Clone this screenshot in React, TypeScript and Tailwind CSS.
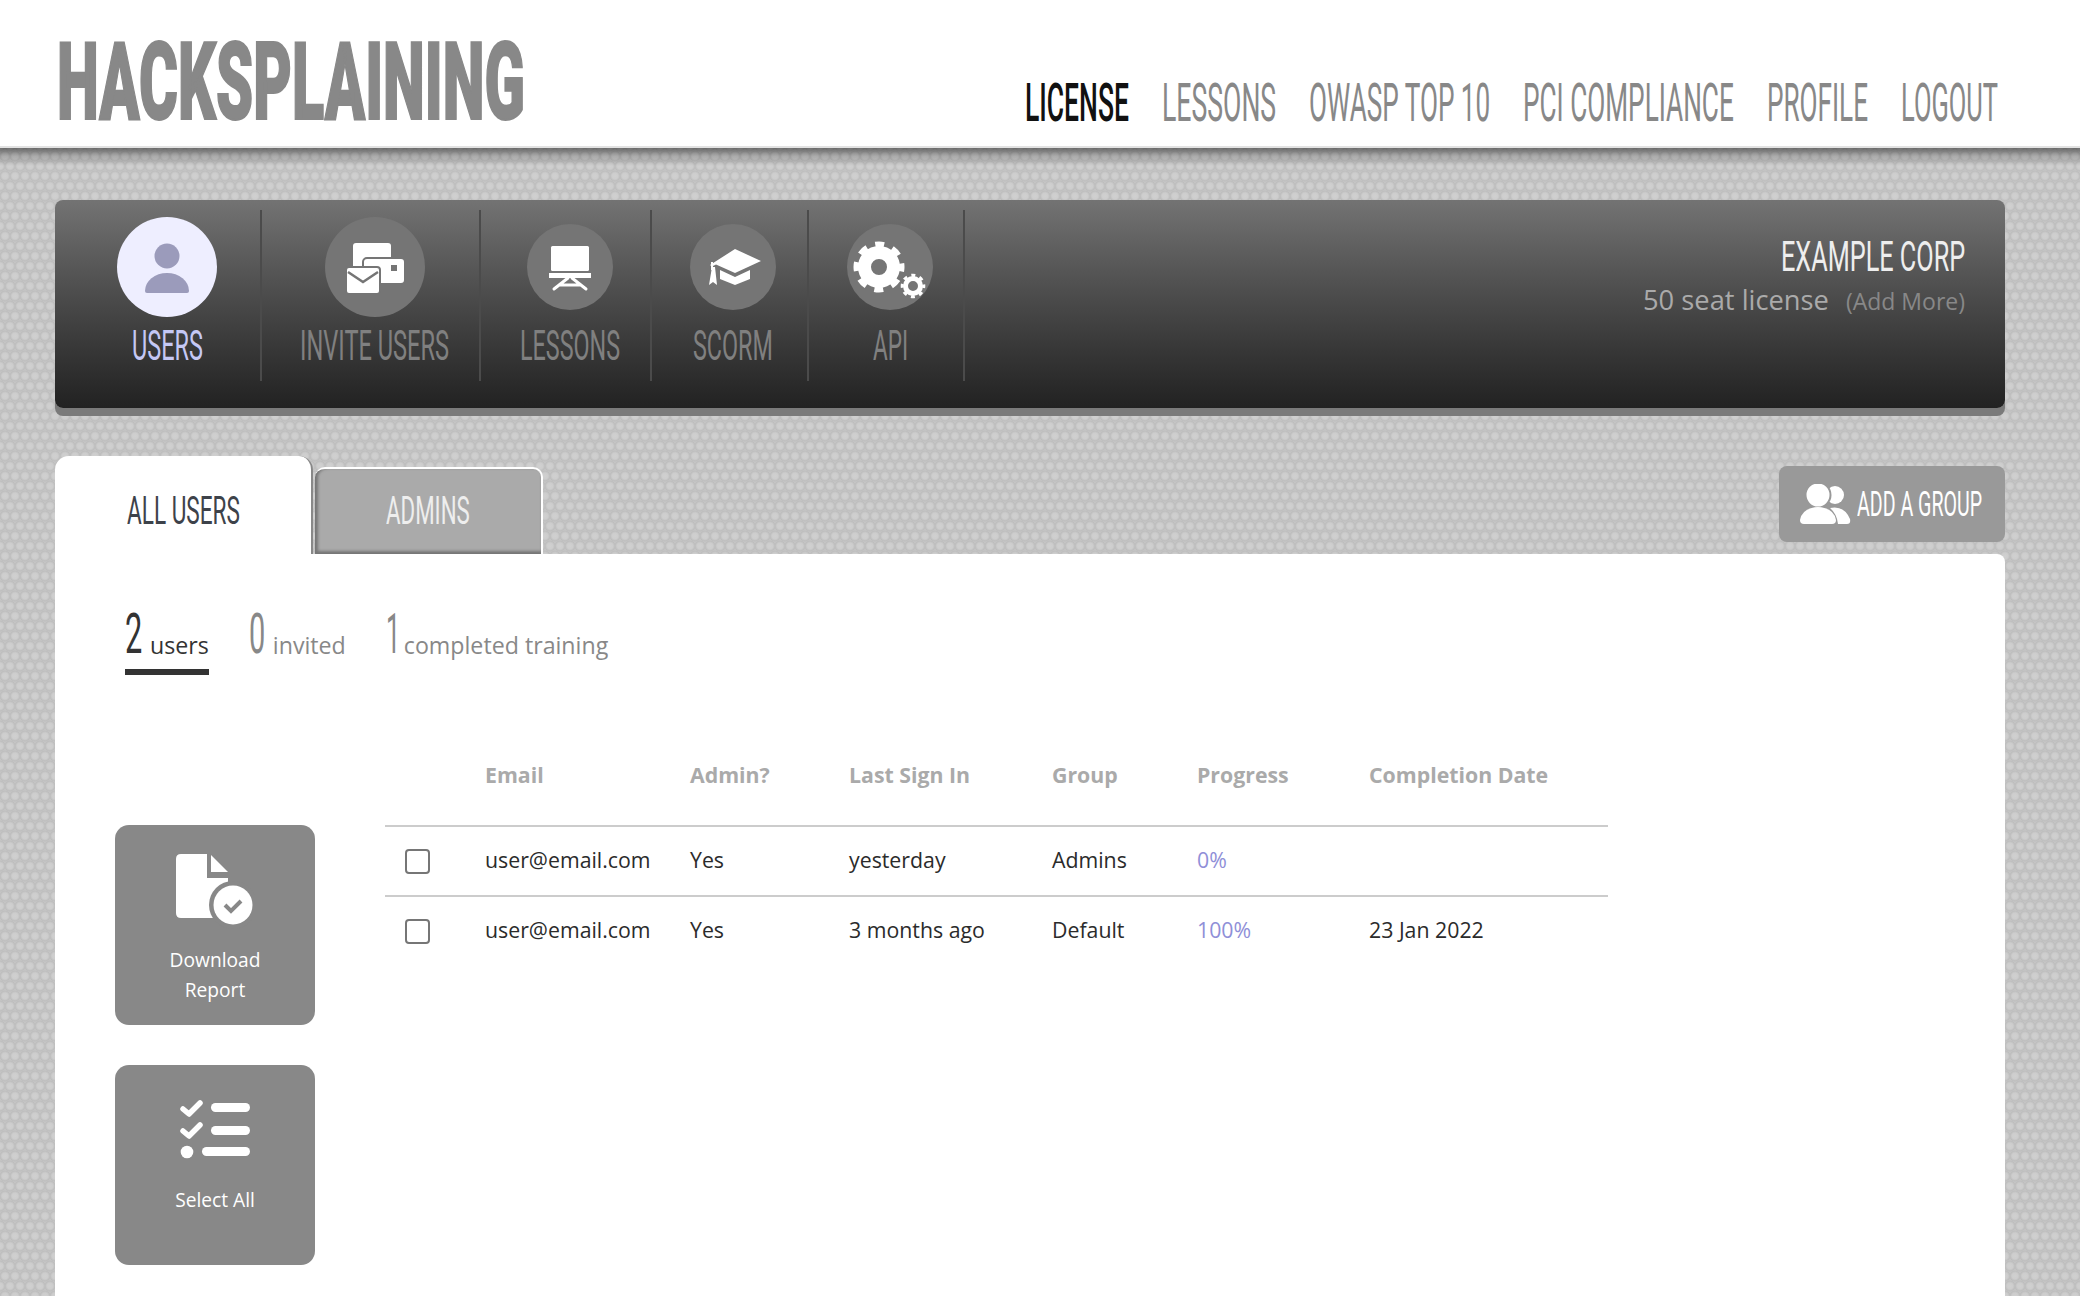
import { useLayoutEffect, useRef, useState } from "react";

// squeezes a line of Roboto to the width of the condensed face in the design
function Fit({ w, className, children }: { w: number; className: string; children: string }) {
  const ref = useRef<HTMLSpanElement>(null);
  const [scale, setScale] = useState(0.5);

  useLayoutEffect(() => {
    if (ref.current) setScale(w / ref.current.offsetWidth);
  }, [w]);

  return (
    <span className={`block shrink-0 font-['Roboto',sans-serif] leading-none ${className}`} style={{ width: w }}>
      <span ref={ref} className="inline-block origin-left whitespace-nowrap" style={{ transform: `scaleX(${scale})` }}>
        {children}
      </span>
    </span>
  );
}

const navLinks = [
  { label: "LICENSE", w: 104, cls: "text-[#111] font-medium" },
  { label: "LESSONS", w: 114, cls: "text-[#888]" },
  { label: "OWASP TOP 10", w: 181, cls: "text-[#888]" },
  { label: "PCI COMPLIANCE", w: 211, cls: "text-[#888]" },
  { label: "PROFILE", w: 101, cls: "text-[#888]" },
  { label: "LOGOUT", w: 97, cls: "text-[#888]" },
];

function UserIcon() {
  return (
    <svg width="100" height="100" viewBox="0 0 100 100">
      <circle cx="50" cy="39" r="12.5" fill="#9b9bbb" />
      <path d="M28 74a22 18 0 0 1 44 0q0 2-2 2H30q-2 0-2-2z" fill="#9b9bbb" />
    </svg>
  );
}

function InviteIcon() {
  return (
    <svg width="100" height="100" viewBox="0 0 100 100">
      <rect x="28" y="26" width="38" height="30" rx="3" fill="#fff" />
      <rect x="38" y="41" width="42" height="26" rx="4" fill="#fff" stroke="#757575" strokeWidth="2" />
      <rect x="66" y="48" width="6" height="6" fill="#757575" />
      <rect x="21" y="50" width="34" height="27" rx="3" fill="#fff" stroke="#757575" strokeWidth="2" />
      <path d="M23 55l15 10 15-10" fill="none" stroke="#757575" strokeWidth="2.5" />
    </svg>
  );
}

function LessonIcon() {
  return (
    <svg width="86" height="86" viewBox="0 0 86 86">
      <rect x="24" y="22" width="38" height="25" rx="1.5" fill="#fff" />
      <rect x="22" y="49" width="42" height="5" fill="#fff" />
      <path d="M41 54L27 65M45 54l14 11M33 61h20" fill="none" stroke="#fff" strokeWidth="3" strokeLinecap="round" />
    </svg>
  );
}

function CapIcon() {
  return (
    <svg width="86" height="86" viewBox="0 0 86 86">
      <path d="M45 25l26 12-26 12-19-8.500-4 2-2-1.500z" fill="#fff" />
      <path d="M30 46l15 7 15-7v9l-15 6-15-6z" fill="#fff" />
      <path d="M22 43l3 0 2 18-4-3-4 3z" fill="#fff" />
      <path d="M22 38v8" stroke="#fff" strokeWidth="2" />
    </svg>
  );
}

function GearsIcon() {
  return (
    <svg width="86" height="86" viewBox="0 0 86 86" fill="none" stroke="#fff">
      <circle cx="32" cy="43" r="14.500" strokeWidth="13" />
      <circle cx="32" cy="43" r="22.500" strokeWidth="6" strokeDasharray="9 8.670" strokeDashoffset="4.500" />
      <circle cx="66" cy="62" r="7.500" strokeWidth="5" />
      <circle cx="66" cy="62" r="10.800" strokeWidth="3" strokeDasharray="4 4.480" strokeDashoffset="2" />
    </svg>
  );
}

function FileCheckIcon() {
  return (
    <svg width="80" height="80" viewBox="0 0 80 80">
      <path d="M6 1h26v24h21v40H6q-5 0-5-5V6q0-5 5-5z" fill="#fff" />
      <path d="M36 2l17 17H36z" fill="#fff" />
      <circle cx="58" cy="52" r="24" fill="#888" />
      <circle cx="58" cy="52" r="19.500" fill="#fff" />
      <path d="M50 52l6 6 10-10" fill="none" stroke="#888" strokeWidth="4" />
    </svg>
  );
}

function ListIcon() {
  return (
    <svg width="70" height="60" viewBox="0 0 70 60">
      <path d="M3 9l6 5L20 3M3 31l6 5L20 25" fill="none" stroke="#fff" strokeWidth="5.500" strokeLinecap="round" strokeLinejoin="round" />
      <circle cx="7" cy="52" r="6.300" fill="#fff" />
      <rect x="31" y="3" width="39" height="9" rx="4.500" fill="#fff" />
      <rect x="31" y="26" width="39" height="9" rx="4.500" fill="#fff" />
      <rect x="22" y="47" width="48" height="9" rx="4.500" fill="#fff" />
    </svg>
  );
}

function GroupIcon() {
  return (
    <svg width="52" height="40" viewBox="0 0 52 40" fill="#fff">
      <circle cx="35" cy="11" r="9" />
      <path d="M30 24q14-3 20 11 1 5-3 5H38q-1-10-8-16z" />
      <circle cx="18" cy="11" r="12.500" stroke="#999" strokeWidth="2" />
      <path d="M0 36q2-12 18-13 16 1 18 13 0 4-4 4H4q-4 0-4-4z" />
    </svg>
  );
}

const tools = [
  { label: "USERS", w: 71, big: true, active: true, pad: "pl-[62px] pr-[43px]", icon: <UserIcon /> },
  { label: "INVITE USERS", w: 149, big: true, active: false, pad: "pl-[38px] pr-[30px]", icon: <InviteIcon /> },
  { label: "LESSONS", w: 100, big: false, active: false, pad: "pl-[39px] pr-[30px]", icon: <LessonIcon /> },
  { label: "SCORM", w: 80, big: false, active: false, pad: "pl-[38px] pr-[31px]", icon: <CapIcon /> },
  { label: "API", w: 35, big: false, active: false, pad: "pl-[38px] pr-[30px]", icon: <GearsIcon /> },
];

const rows = [
  { email: "user@email.com", admin: "Yes", signIn: "yesterday", group: "Admins", progress: "0%", date: "" },
  { email: "user@email.com", admin: "Yes", signIn: "3 months ago", group: "Default", progress: "100%", date: "23 Jan 2022" },
];

const columns = ["", "Email", "Admin?", "Last Sign In", "Group", "Progress", "Completion Date"];

export default function App() {
  return (
    <div className="h-screen overflow-hidden bg-[#c8c8c8] font-['Open_Sans',sans-serif]">
      <header className="h-[148px] bg-white border-b-2 border-[#e2e2e2] flex justify-between pl-[57px] pr-[82px]">
        <Fit w={468} className="mt-[28px] text-[108px] font-black text-[#888] [-webkit-text-stroke:2px_#888]">
          HACKSPLAINING
        </Fit>
        <nav className="flex gap-[33px] pt-[77px]">
          {navLinks.map((link) => (
            <Fit key={link.label} w={link.w} className={`text-[53px] ${link.cls}`}>
              {link.label}
            </Fit>
          ))}
        </nav>
      </header>

      <main className="h-[1148px] pl-[55px] pr-[75px] pt-[52px] [background-image:linear-gradient(to_bottom,rgba(0,0,0,.45),rgba(0,0,0,.18)_8px,rgba(0,0,0,0)_18px),radial-gradient(circle_at_50%_40%,#d0d0d0_0,#cdcdcd_3px,#bdbdbd_5px,rgba(189,189,189,0)_6px),radial-gradient(circle_at_50%_40%,#d0d0d0_0,#cdcdcd_3px,#bdbdbd_5px,rgba(189,189,189,0)_6px)] [background-size:100%_18px,10px_20px,10px_20px] [background-position:0_0,0_0,5px_10px] [background-repeat:no-repeat,repeat,repeat]">
        <section className="h-[208px] rounded-lg bg-gradient-to-b from-[#737373] to-[#222] shadow-[0_8px_0_#7a7a7a] flex justify-between">
          <div className="flex items-start pt-[10px]">
            {tools.map((tool) => (
              <div key={tool.label} className={`h-[171px] border-r-2 border-[#4b4b4b] flex flex-col items-center ${tool.pad}`}>
                <div className="h-[100px] mt-[7px] flex items-center">
                  <div
                    className={`rounded-full flex items-center justify-center ${tool.big ? "size-[100px]" : "size-[86px]"} ${
                      tool.active ? "bg-[#eeeeff]" : "bg-[#757575]"
                    }`}
                  >
                    {tool.icon}
                  </div>
                </div>
                <Fit w={tool.w} className={`mt-[8px] text-[42px] ${tool.active ? "text-[#c5c8f5]" : "text-[#808080]"}`}>
                  {tool.label}
                </Fit>
              </div>
            ))}
          </div>
          <div className="flex flex-col items-end pr-[40px] pt-[36px]">
            <Fit w={184} className="text-[42px] text-[#eee]">
              EXAMPLE CORP
            </Fit>
            <div className="mt-[2px] flex items-baseline gap-[17px]">
              <span className="text-[27.300px] text-[#aaa]">50 seat license</span>
              <span className="text-[23px] text-[#888]">(Add More)</span>
            </div>
          </div>
        </section>

        <div className="mt-[48px] flex items-end justify-between">
          <div className="flex items-end">
            <div className="w-[258px] h-[98px] bg-white rounded-t-[14px] border-r-2 border-[#888] pl-[72px] pt-[36px]">
              <Fit w={113} className="text-[39px] text-[#3d424a]">
                ALL USERS
              </Fit>
            </div>
            <div className="ml-[2px] w-[228px] h-[87px] bg-[#aaa] rounded-t-[10px] border-t-2 border-r-2 border-white shadow-[inset_4px_0_3px_-1px_#777,inset_0_-4px_3px_-1px_#777] pl-[71px] pt-[23px]">
              <Fit w={84} className="text-[39px] text-[#eee]">
                ADMINS
              </Fit>
            </div>
          </div>
          <button className="mb-[12px] w-[226px] h-[76px] bg-[#999] rounded-lg flex items-center pl-[21px] gap-[5px]">
            <GroupIcon />
            <Fit w={125} className="text-[35px] text-white">
              ADD A GROUP
            </Fit>
          </button>
        </div>

        <section className="h-[800px] bg-white rounded-tr-lg pt-[52px]">
          <div className="pl-[70px] flex gap-[40px] text-[23.200px]">
            <div className="h-[69px] flex items-baseline gap-[8px] border-b-[6px] border-[#333] text-[#333]">
              <Fit w={17} className="text-[56px]">2</Fit>
              <span className="translate-y-px">users</span>
            </div>
            <div className="h-[69px] flex items-baseline gap-[8px] text-[#888]">
              <Fit w={16} className="text-[56px]">0</Fit>
              <span className="translate-y-px">invited</span>
            </div>
            <div className="h-[69px] flex items-baseline gap-[4px] text-[#888]">
              <Fit w={14} className="text-[56px]">1</Fit>
              <span className="translate-y-px">completed training</span>
            </div>
          </div>

          <div className="mt-[50px] pl-[60px] flex gap-[70px]">
            <div className="pt-[100px] flex flex-col gap-[40px] w-[200px] shrink-0">
              <button className="h-[200px] rounded-[14px] bg-[#888] text-white text-[19.200px] font-medium leading-[30px] flex flex-col items-center pt-[28px]">
                <FileCheckIcon />
                <span className="mt-[12px]">Download</span>
                <span>Report</span>
              </button>
              <button className="h-[200px] rounded-[14px] bg-[#888] text-white text-[19.200px] font-medium leading-[30px] flex flex-col items-center pt-[35px]">
                <ListIcon />
                <span className="mt-[25px]">Select All</span>
              </button>
            </div>

            <table className="w-[1223px] h-fit table-fixed border-collapse text-[21.300px] text-[#2b2b2b] text-left">
              <colgroup>
                <col className="w-[100px]" />
                <col className="w-[205px]" />
                <col className="w-[159px]" />
                <col className="w-[203px]" />
                <col className="w-[145px]" />
                <col className="w-[172px]" />
                <col className="w-[239px]" />
              </colgroup>
              <thead>
                <tr className="h-[101px] border-b-2 border-[#ccc]">
                  {columns.map((col) => (
                    <th key={col} className="p-0 font-bold text-[#aaa]">
                      {col}
                    </th>
                  ))}
                </tr>
              </thead>
              <tbody>
                {rows.map((row, i) => (
                  <tr key={i} className={`h-[70px] ${i === 0 ? "border-b-2 border-[#ccc]" : ""}`}>
                    <td className="p-0 pl-[20px]">
                      <div className="size-[25px] rounded-[4px] border-2 border-[#767676] bg-white" />
                    </td>
                    <td className="p-0 pb-[3px]">{row.email}</td>
                    <td className="p-0 pb-[3px]">{row.admin}</td>
                    <td className="p-0 pb-[3px]">{row.signIn}</td>
                    <td className="p-0 pb-[3px]">{row.group}</td>
                    <td className="p-0 pb-[3px] text-[#8f8fd8]">{row.progress}</td>
                    <td className="p-0 pb-[3px]">{row.date}</td>
                  </tr>
                ))}
              </tbody>
            </table>
          </div>
        </section>
      </main>
    </div>
  );
}
